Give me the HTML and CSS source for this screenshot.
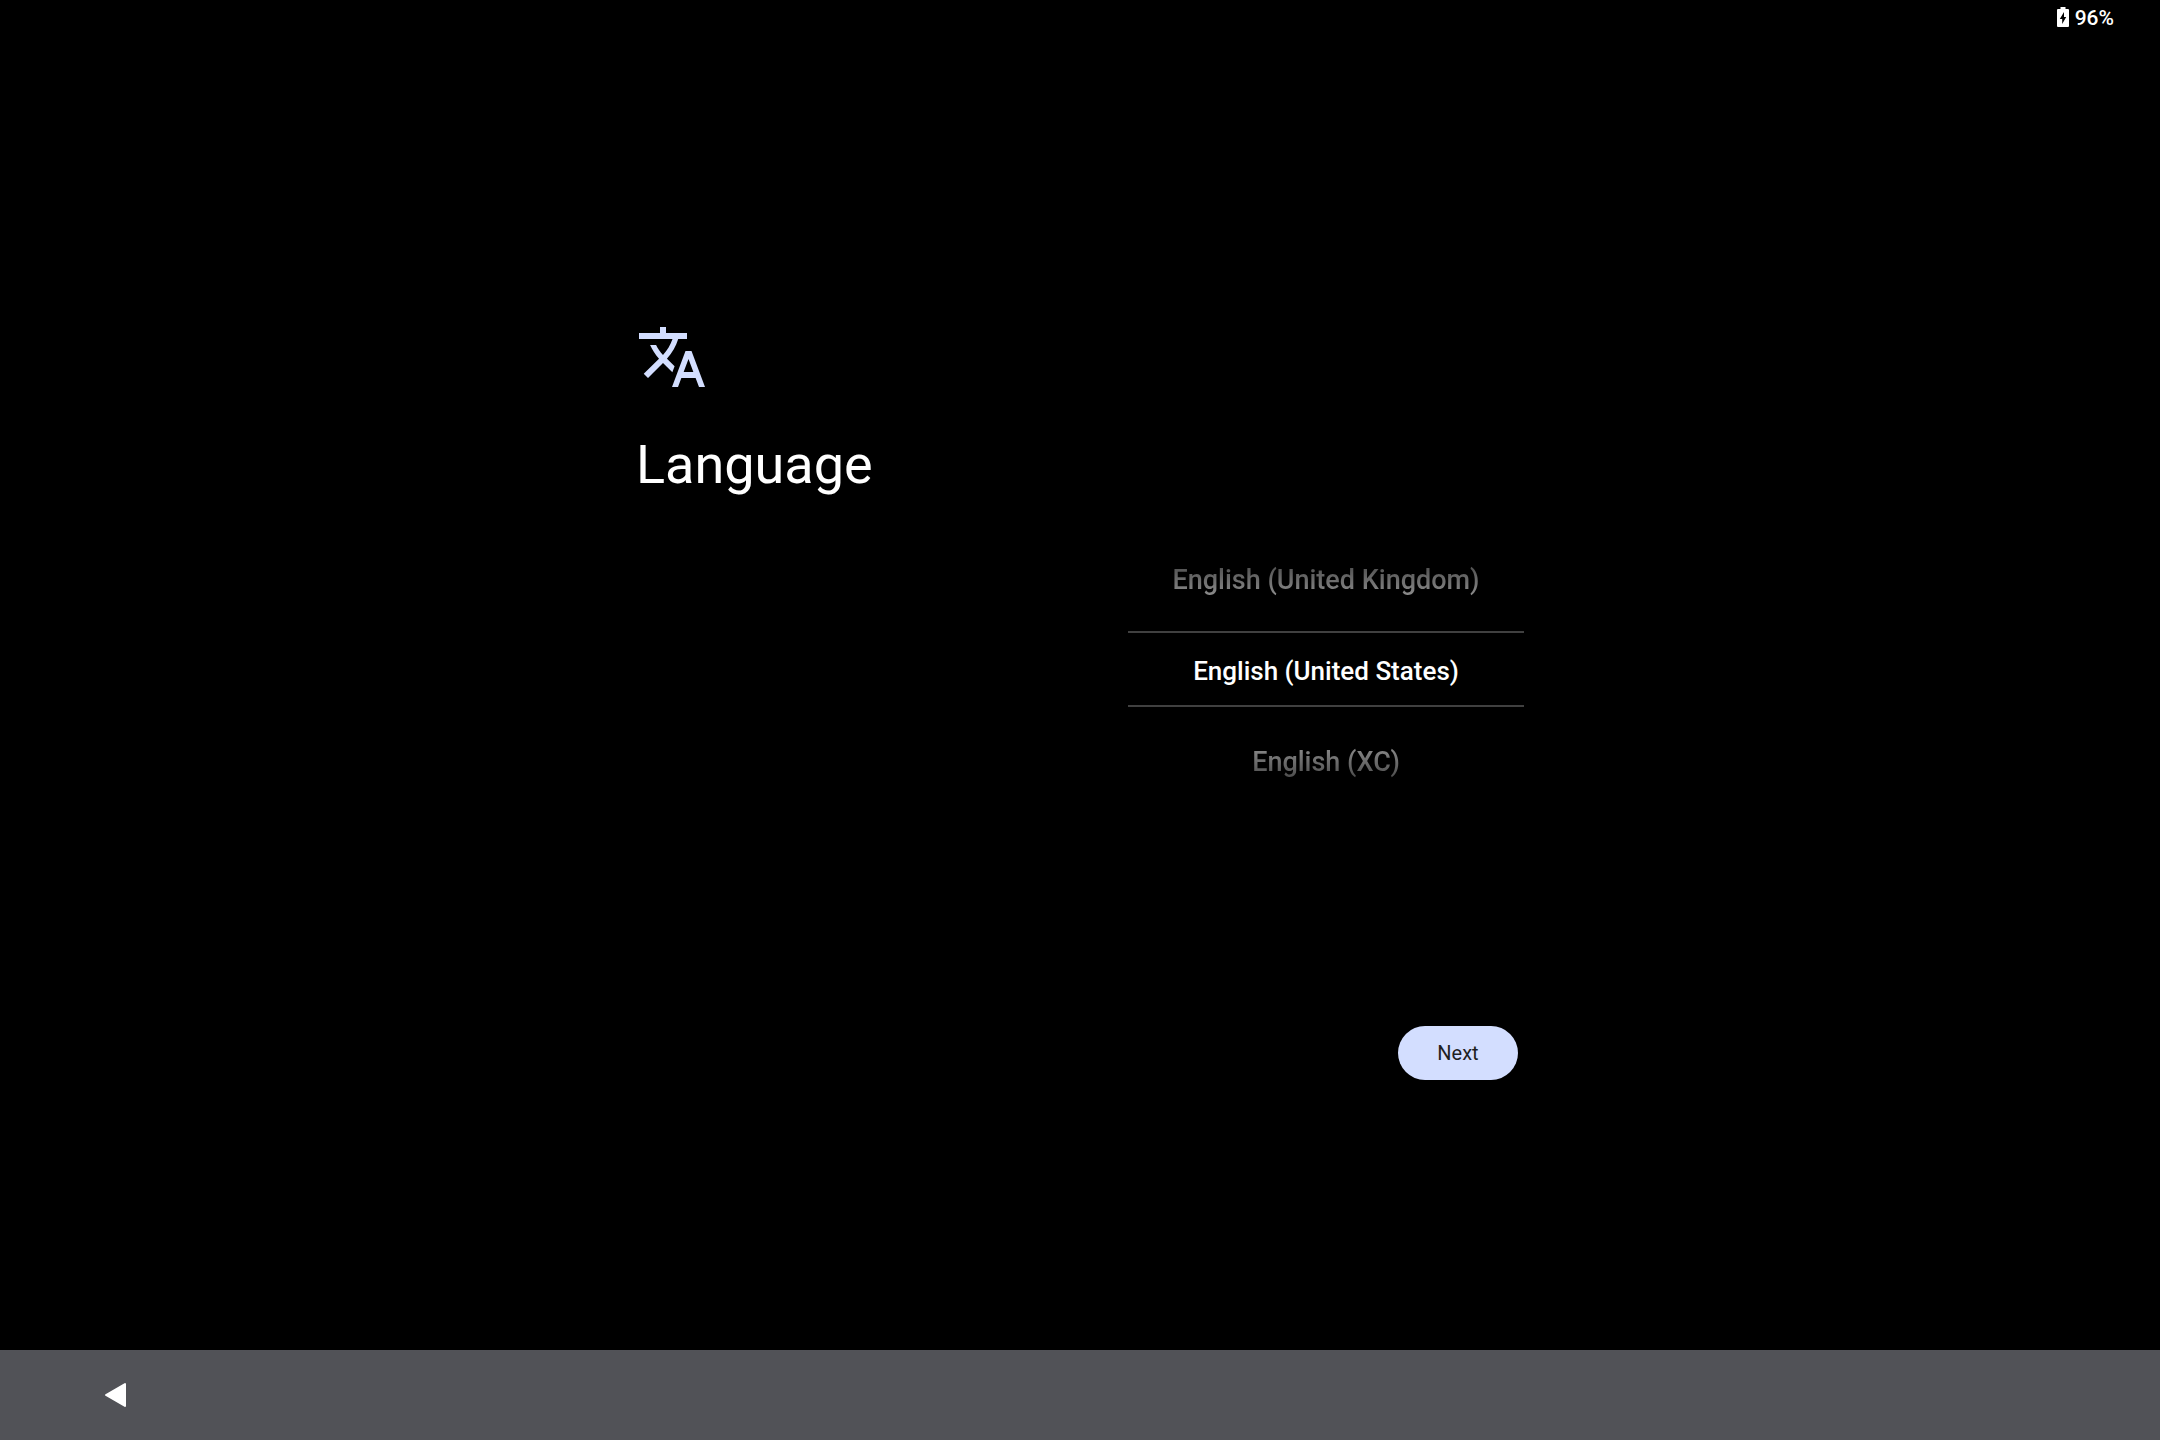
FILE: index.html
```html
<!DOCTYPE html>
<html lang="en">
<head>
<meta charset="utf-8">
<meta name="viewport" content="width=device-width, initial-scale=1">
<title>Language</title>
<link rel="stylesheet" href="styles.css">
</head>
<body>
<header class="status-bar">
  <svg class="battery" viewBox="0 0 12 20" aria-hidden="true">
    <path fill-rule="evenodd" d="M3.500 0h5v2H11a1 1 0 0 1 1 1v16a1 1 0 0 1-1 1H1a1 1 0 0 1-1-1V3a1 1 0 0 1 1-1h2.500zM7 5L2.800 12H5.200v5L9.200 10H7z"/>
  </svg>
  <span>96%</span>
</header>
<main class="setup">
  <form class="panel">
    <div class="intro">
      <svg class="translate" viewBox="0 0 24 24" aria-hidden="true">
        <path d="M12.870 15.070l-2.540-2.510.03-.03c1.740-1.940 2.980-4.170 3.710-6.530H17V4h-7V2H8v2H1v1.990h11.170C11.500 7.920 10.440 9.750 9 11.350 8.070 10.320 7.300 9.190 6.690 8h-2c.73 1.630 1.730 3.170 2.980 4.560l-5.090 5.020L4 19l5-5 3.110 3.110.76-2.040zM18.500 10h-2L12 22h2l1.120-3h4.750L21 22h2l-4.500-12zm-2.620 7l1.620-4.330L19.120 17h-3.240z"/>
      </svg>
      <h1 class="title">Language</h1>
    </div>
    <div class="content">
      <div class="picker" role="radiogroup" aria-label="Language">
        <label class="option option-above"><input class="choice" type="radio" name="language"><span class="name">English (United Kingdom)</span></label>
        <label class="option option-current"><input class="choice" type="radio" name="language" checked><span class="name">English (United States)</span></label>
        <label class="option option-below"><input class="choice" type="radio" name="language"><span class="name">English (XC)</span></label>
      </div>
      <button class="next" type="button">Next</button>
    </div>
  </form>
</main>
<nav class="nav-bar">
  <button class="back" type="button" aria-label="Back">
    <svg class="back-icon" viewBox="0 0 22 26" aria-hidden="true">
      <path d="M21 2v22L2 13z" stroke-width="2" stroke-linejoin="round"/>
    </svg>
  </button>
</nav>
</body>
</html>
```
FILE: styles.css
```css
* {
  box-sizing: border-box;
}

body {
  margin: 0;
  min-height: 100vh;
  display: flex;
  flex-direction: column;
  background: #000;
  color: #fff;
  font-family: Roboto, "Liberation Sans", sans-serif;
}

.status-bar {
  display: flex;
  justify-content: flex-end;
  align-items: center;
  gap: 6px;
  height: 36px;
  padding-right: 46px;
  font-size: 21px;
  font-weight: 500;
}

.battery {
  width: 12px;
  height: 20px;
  margin-bottom: 2px;
  fill: #fff;
}

.setup {
  flex: 1;
  display: flex;
  justify-content: center;
  align-items: center;
  padding-top: 15px;
}

.panel {
  display: grid;
  grid-template-columns: 1fr 396px;
  width: 100%;
  max-width: 888px;
}

.translate {
  display: block;
  width: 72px;
  height: 72px;
  fill: #d3deff;
}

.title {
  margin: 40px 0 0;
  font-size: 54px;
  line-height: 64px;
  font-weight: 400;
}

.content {
  display: flex;
  flex-direction: column;
  padding-top: 219px;
}

.picker {
  display: flex;
  flex-direction: column;
  gap: 15px;
}

.option {
  display: flex;
  justify-content: center;
  align-items: center;
  height: 76px;
  padding-top: 3px;
  font-size: 27px;
  line-height: 32px;
  font-weight: 500;
}

.choice {
  appearance: none;
  width: 0;
  height: 0;
  margin: 0;
}

.option-current {
  border-top: 2px solid #404040;
  border-bottom: 2px solid #404040;
  font-size: 26px;
}

.option-above .name,
.option-below .name {
  color: transparent;
  background-clip: text;
}

.option-above .name {
  background-image: linear-gradient(#4c4c4c, #8c8c8c);
}

.option-below .name {
  background-image: linear-gradient(#8c8c8c, #4c4c4c);
}

.next {
  align-self: flex-end;
  width: 120px;
  height: 54px;
  margin: 228px 6px 0 0;
  border: 0;
  border-radius: 27px;
  background: #d3deff;
  color: #1f1f1f;
  font-family: inherit;
  font-size: 20px;
}

.nav-bar {
  display: flex;
  align-items: center;
  height: 90px;
  padding-left: 80px;
  background: #515257;
}

.back {
  display: flex;
  justify-content: center;
  align-items: center;
  width: 70px;
  height: 70px;
  padding: 0;
  border: 0;
  background: none;
}

.back-icon {
  width: 22px;
  height: 26px;
  fill: #fff;
  stroke: #fff;
}
```
